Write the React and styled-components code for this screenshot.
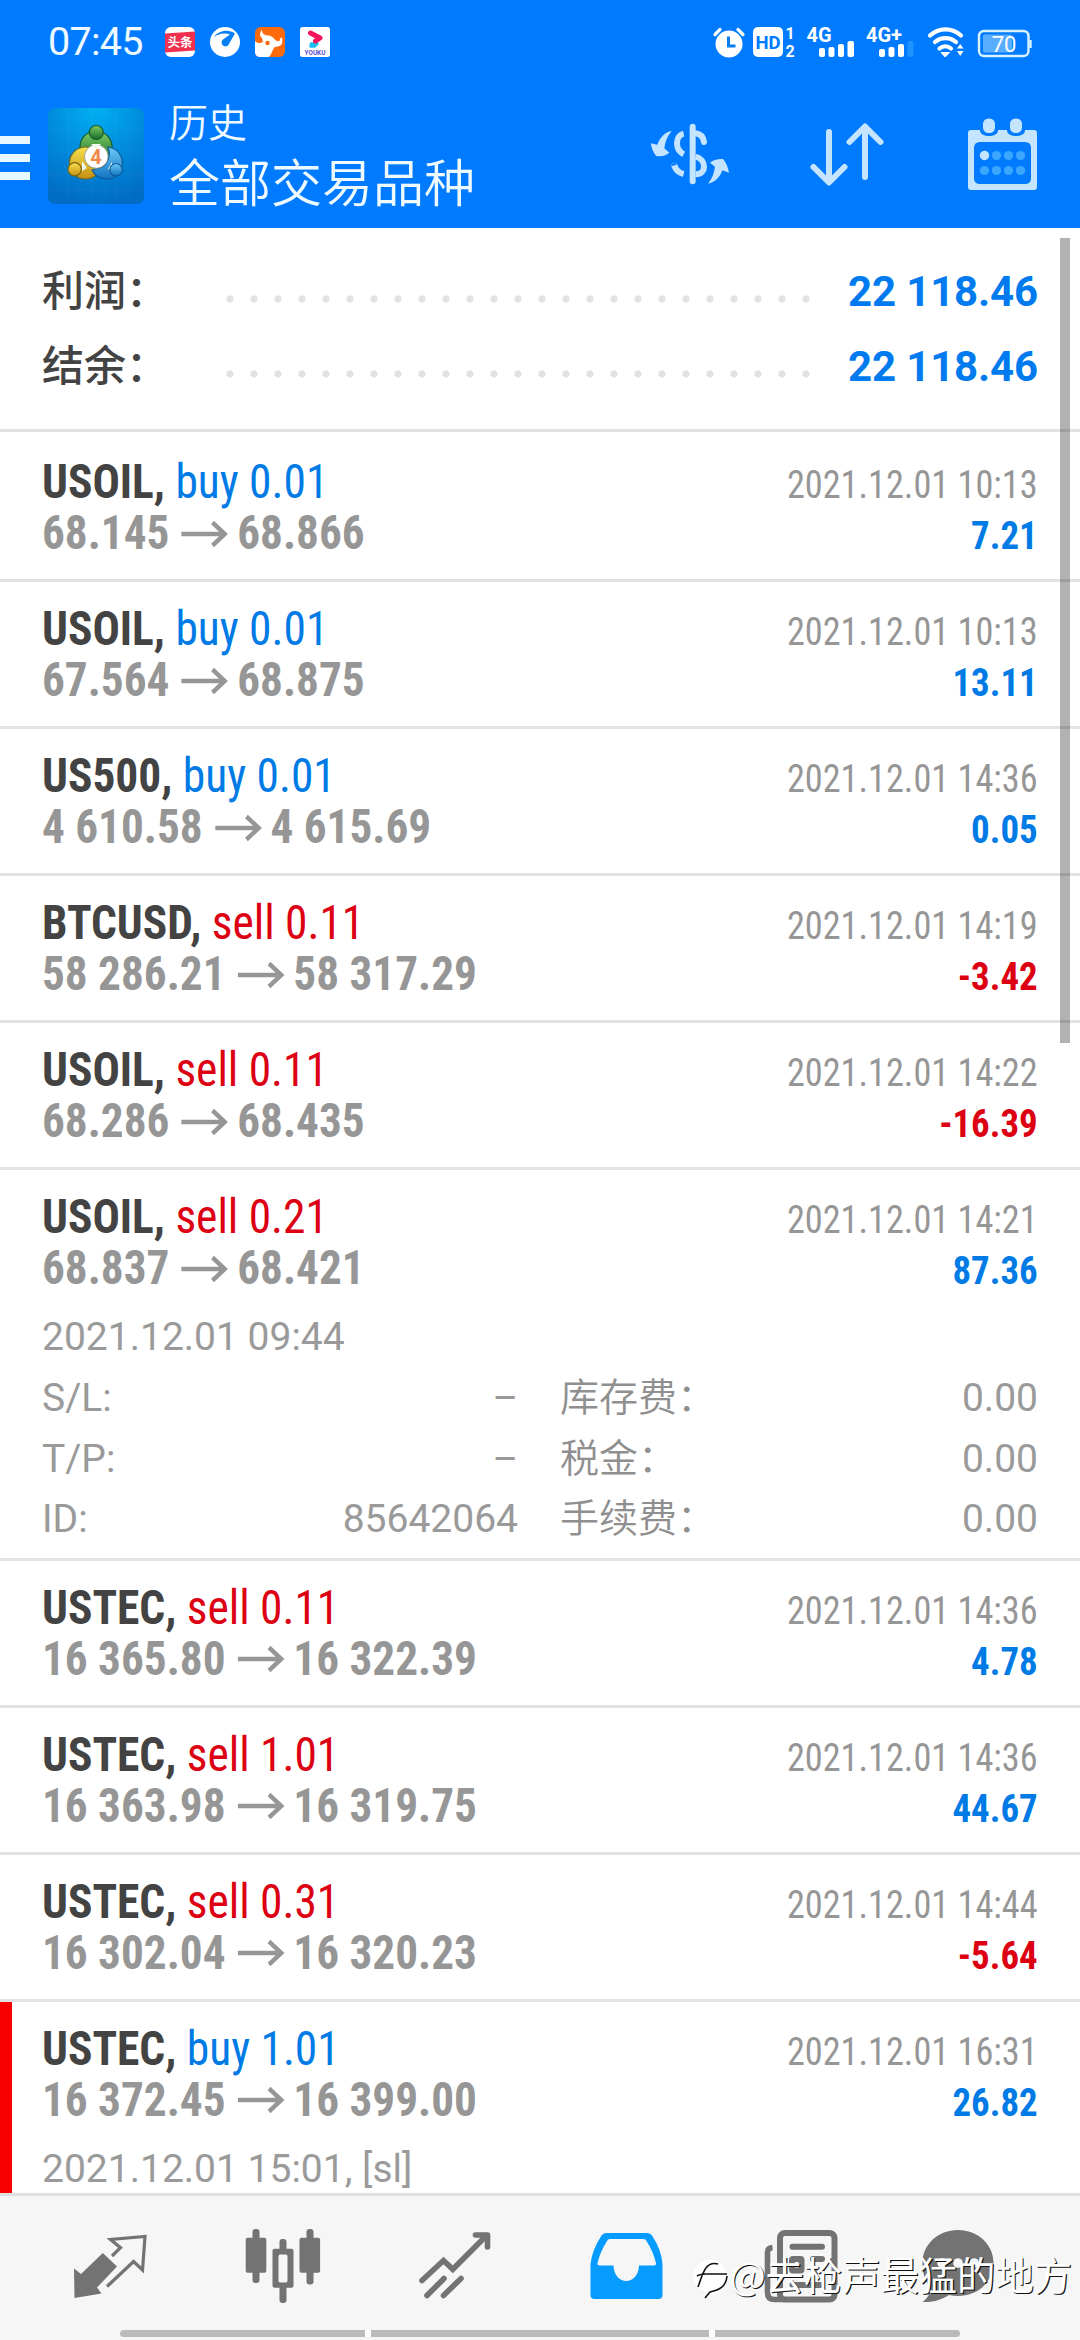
import React from 'react'
import styled, { createGlobalStyle } from 'styled-components'

const summary = [
  { label: '利润：', value: '22 118.46' },
  { label: '结余：', value: '22 118.46' },
]

const deals = [
  { id: 1, symbol: 'USOIL', side: 'buy', volume: '0.01', open: '68.145', close: '68.866', time: '2021.12.01 10:13', profit: '7.21' },
  { id: 2, symbol: 'USOIL', side: 'buy', volume: '0.01', open: '67.564', close: '68.875', time: '2021.12.01 10:13', profit: '13.11' },
  { id: 3, symbol: 'US500', side: 'buy', volume: '0.01', open: '4 610.58', close: '4 615.69', time: '2021.12.01 14:36', profit: '0.05' },
  { id: 4, symbol: 'BTCUSD', side: 'sell', volume: '0.11', open: '58 286.21', close: '58 317.29', time: '2021.12.01 14:19', profit: '-3.42' },
  { id: 5, symbol: 'USOIL', side: 'sell', volume: '0.11', open: '68.286', close: '68.435', time: '2021.12.01 14:22', profit: '-16.39' },
  {
    id: 6, symbol: 'USOIL', side: 'sell', volume: '0.21', open: '68.837', close: '68.421', time: '2021.12.01 14:21', profit: '87.36',
    opened: '2021.12.01 09:44',
    details: [
      ['S/L:', '–', '库存费：', '0.00'],
      ['T/P:', '–', '税金：', '0.00'],
      ['ID:', '85642064', '手续费：', '0.00'],
    ],
  },
  { id: 7, symbol: 'USTEC', side: 'sell', volume: '0.11', open: '16 365.80', close: '16 322.39', time: '2021.12.01 14:36', profit: '4.78' },
  { id: 8, symbol: 'USTEC', side: 'sell', volume: '1.01', open: '16 363.98', close: '16 319.75', time: '2021.12.01 14:36', profit: '44.67' },
  { id: 9, symbol: 'USTEC', side: 'sell', volume: '0.31', open: '16 302.04', close: '16 320.23', time: '2021.12.01 14:44', profit: '-5.64' },
  {
    id: 10, symbol: 'USTEC', side: 'buy', volume: '1.01', open: '16 372.45', close: '16 399.00', time: '2021.12.01 16:31', profit: '26.82',
    opened: '2021.12.01 15:01, [sl]', stopped: true,
  },
]

/* ---------- status bar ---------- */

function NotificationIcons() {
  return (
    <>
      <svg width="30" height="30" viewBox="0 0 30 30">
        <rect width="30" height="30" rx="6" fill="#fff" />
        <path d="M0 6.5 30 4.500v19L0 25.500z" fill="#f0304f" />
        <IconText x="15" y="20" fontSize="12.500" fill="#fff" $cjk>头条</IconText>
      </svg>
      <svg width="30" height="30" viewBox="0 0 30 30">
        <circle cx="15" cy="15" r="15" fill="#fff" />
        <path d="M4 10C8 4 18 1.500 25 6.500L19.500 16a4 4 0 1 1-6-4L20 7.500C14 5.500 8 7 4 10z" fill="#0a80f5" />
      </svg>
      <svg width="30" height="30" viewBox="0 0 30 30">
        <rect width="30" height="30" rx="6" fill="#ff6a0d" />
        <path d="M7 3c0 4 2 5 6 5.500 4 0 5 2.500 8 5 2 1.500 4 1 4-2l2-1c1 5 0 9-5 9l-3 1-3 6.500c-1 2-2 3-3 3H6c-4 0-6-2-6-5V14c3 3 6 2 8 1l-1-4C4 9 5 5 7 3z" fill="#fff" />
        <circle cx="12.500" cy="16" r="2.200" fill="#ff6a0d" />
      </svg>
      <svg width="30" height="30" viewBox="0 0 30 30">
        <rect width="30" height="30" rx="2.500" fill="#fff" />
        <path d="M11 16.500h6.500l-3 3h-4z" fill="#19bdf0" stroke="#19bdf0" strokeWidth="2.500" strokeLinejoin="round" />
        <path d="M10.500 6 20 11 15.500 14" fill="none" stroke="#f5155b" strokeWidth="5" strokeLinecap="round" strokeLinejoin="round" />
        <IconText x="15" y="27.500" fontSize="6.400" fill="#5c4fd0" $bold>YOUKU</IconText>
      </svg>
    </>
  )
}

function SystemIcons() {
  return (
    <svg width="319" height="32" viewBox="713 26 319 32" fill="#fff">
      {/* alarm */}
      <circle cx="729" cy="44" r="13.500" />
      <path d="M715 34.500 720 29.500M743 34.500 738 29.500" stroke="#fff" strokeWidth="3.200" strokeLinecap="round" />
      <path d="M728.500 36.500V46h7" fill="none" stroke="#0a7cf2" strokeWidth="3" />
      {/* HD */}
      <rect x="753" y="27" width="30" height="30" rx="5" />
      <IconText x="768" y="49" fontSize="18.500" fill="#007bff" $bold>HD</IconText>
      <IconText x="790" y="38.500" fontSize="16" $bold>1</IconText>
      <IconText x="790" y="57" fontSize="16" $bold>2</IconText>
      {/* mobile signal */}
      <IconText x="819" y="42" fontSize="20" $bold>4G</IconText>
      <rect x="819" y="48" width="6" height="9" rx="2" />
      <rect x="828.500" y="47" width="6" height="10" rx="2" />
      <rect x="838" y="44" width="6" height="13" rx="2" />
      <rect x="847.500" y="41" width="6.500" height="16" rx="2" />
      <IconText x="884" y="42" fontSize="20" $bold>4G+</IconText>
      <rect x="879" y="49" width="6" height="8" rx="2" />
      <rect x="888.500" y="47" width="6" height="10" rx="2" />
      <rect x="898" y="44" width="6" height="13" rx="2" />
      <rect x="907.500" y="41" width="6" height="16" rx="2" fill="#1c93ff" />
      {/* wifi */}
      <g fill="none" stroke="#fff" strokeWidth="4.200" strokeLinecap="round">
        <path d="M930 35.500a22.500 22.500 0 0 1 31 0" />
        <path d="M935 42a16 16 0 0 1 21 0" />
        <path d="M939.500 48.500a9 9 0 0 1 11.500 0" />
      </g>
      <path d="M941 52.500h8.500L945.200 57z" stroke="#fff" strokeLinejoin="round" />
      <path d="M957 48.500h6.500L960.200 44zM957 51h6.500L960.200 56z" />
      {/* battery */}
      <rect x="979" y="31" width="49.500" height="25" rx="5" fill="none" stroke="#d8f2ff" strokeWidth="2.400" />
      <rect x="983" y="34.500" width="29" height="18" rx="1.500" fill="#58adff" />
      <path d="M1030.500 40v8" stroke="#d8f2ff" strokeWidth="2.400" />
      <IconText x="1004" y="52" fontSize="22">70</IconText>
    </svg>
  )
}

/* ---------- toolbar ---------- */

function AppLogo() {
  return (
    <svg width="96" height="96" viewBox="0 0 96 96">
      <defs>
        <radialGradient id="tile" cx="0.5" cy="0" r="1">
          <stop offset="0" stopColor="#00b0f2" />
          <stop offset="0.500" stopColor="#008bdc" />
          <stop offset="1" stopColor="#006cc4" />
        </radialGradient>
        <linearGradient id="green" x2="0" y2="1">
          <stop offset="0" stopColor="#7fcb66" />
          <stop offset="1" stopColor="#146a2a" />
        </linearGradient>
        <linearGradient id="yellow" x2="0" y2="1">
          <stop offset="0" stopColor="#f8e14e" />
          <stop offset="1" stopColor="#c48e10" />
        </linearGradient>
        <linearGradient id="blue" x2="0" y2="1">
          <stop offset="0" stopColor="#6cc8f6" />
          <stop offset="1" stopColor="#1274c2" />
        </linearGradient>
      </defs>
      <rect width="96" height="96" rx="7" fill="url(#tile)" />
      <path d="M20 0v96M32 0v96M44 0v96M56 0v96M68 0v96M80 0v96M0 22h96M0 44h96M0 66h96M0 82h96" stroke="#fff" strokeOpacity="0.040" />
      <circle cx="48" cy="39" r="16" fill="url(#green)" stroke="#155d2b" strokeWidth="1.200" />
      <circle cx="37.500" cy="55" r="16" fill="url(#yellow)" stroke="#6f681f" strokeWidth="1.200" />
      <path d="M44 62a16 16 0 1 0 16-23c3 8 0 16-6 20z" fill="url(#blue)" stroke="#0f5a9b" strokeWidth="1.200" />
      <circle cx="48.300" cy="48.500" r="11.800" fill="#fff" stroke="#8a9387" strokeWidth="0.800" />
      <path d="m43 36 10 0-5 5zM34 53l5 7-5 3zM60 61l4-7 0 9z" fill="#eef7ee" />
      <circle cx="48.300" cy="24.500" r="7" fill="url(#green)" stroke="#155d2b" strokeWidth="1.200" />
      <circle cx="26.700" cy="61.300" r="6.600" fill="url(#yellow)" stroke="#7a6515" strokeWidth="1.200" />
      <circle cx="68" cy="61.700" r="6.200" fill="url(#blue)" stroke="#0f5a9b" strokeWidth="1.200" />
      <IconText x="48" y="55.500" fontSize="20" fill="#f08a4b" $bold>4</IconText>
    </svg>
  )
}

function CurrencyIcon() {
  return (
    <svg width="80" height="62" viewBox="31 309 240 186" fill="#c4e4ff">
      <rect x="150" y="311" width="18" height="182" rx="9" />
      <g fill="none" stroke="#c4e4ff" strokeWidth="18">
        <path d="M132 341c-24 5-29 46 0 62" />
        <path d="M132 462c-16-4-24-12-28-26" strokeLinecap="butt" />
        <circle cx="104" cy="437" r="0.500" strokeWidth="17" />
        <path d="M168 340c15 2 23 12 25 26" strokeLinecap="round" />
        <path d="M168 410c33 9 34 53 0 53" />
      </g>
      <path d="M96 333C76 336 61 352 53 374l-20-4c3 15 8 29 17 38 16 2 29-1 39-10l-15-13c2-18 9-37 22-52z" />
      <path d="M205 491c20-3 36-19 43-40l20 7c-3-16-8-30-18-41-16-1-29 3-39 11l15 12c-2 18-9 36-21 51z" />
    </svg>
  )
}

function SortIcon() {
  return (
    <svg width="74" height="64" viewBox="808 123 74 64" fill="none" stroke="#c4e4ff" strokeWidth="6" strokeLinecap="round" strokeLinejoin="round">
      <path d="M828 133v50M812.500 168l15.500 15.500L843.500 168" />
      <path d="M864 178v-50M848.500 143l15.500-15.500L879.500 143" />
    </svg>
  )
}

function CalendarIcon() {
  return (
    <svg width="69" height="72" viewBox="0 0 69 72" fill="#c4e4ff">
      <path fillRule="evenodd" d="M3 12h9c0 3.500 3 6 9 6s9-2.500 9-6h9c0 3.500 3 6 9 6s9-2.500 9-6h9q3 0 3 3v54q0 3-3 3H3q-3 0-3-3V15q0-3 3-3zM12 24q-6 0-6 6v30q0 6 6 6h45q6 0 6-6V30q0-6-6-6z" />
      <rect x="15" y="0.500" width="12" height="14.500" rx="5.500" />
      <rect x="42" y="0.500" width="12" height="14.500" rx="5.500" />
      <circle cx="16.500" cy="37.500" r="4.700" />
      <g fill="#3ba7ff">
        {[28.5, 40.5, 52.5].map((x) => <circle key={x} cx={x} cy="37.500" r="4.600" />)}
        {[16.5, 28.5, 40.5, 52.5].map((x) => <circle key={x} cx={x} cy="52.500" r="4.600" />)}
      </g>
    </svg>
  )
}

/* ---------- bottom navigation ---------- */

function QuotesIcon() {
  return (
    <svg width="74" height="74" viewBox="73 2229 74 74">
      <path d="M74 2268.500 81 2274 102.800 2253 117 2266.500 97 2287.500 101.500 2293.500 74.500 2298z" fill="#737373" />
      <path d="M112 2256 120.500 2247.700 110.500 2239.500 145 2236.500 142.500 2270 133.600 2261.500 107 2286.500" fill="none" stroke="#737373" strokeWidth="3.200" />
    </svg>
  )
}

function ChartIcon() {
  return (
    <svg width="76" height="76" viewBox="243.500 2228 76 76" fill="#737373">
      <rect x="251" y="2229" width="7" height="54" rx="3" />
      <rect x="244.200" y="2237.700" width="20.600" height="35" rx="2" />
      <rect x="305" y="2229" width="7" height="55.500" rx="3" />
      <rect x="298" y="2237.700" width="20.600" height="35" rx="2" />
      <rect x="278" y="2239" width="7" height="15" rx="3" />
      <rect x="278" y="2284" width="7" height="19" rx="3" />
      <path fillRule="evenodd" d="M273 2248.700h17q2 0 2 2v35q0 2-2 2h-17q-2 0-2-2v-35q0-2 2-2zM278.500 2254.500q-1.500 0-1.500 2v24q0 2 1.500 2h6q1.500 0 1.500-2v-24q0-2-1.500-2z" />
    </svg>
  )
}

function TradeIcon() {
  return (
    <svg width="74" height="74" viewBox="417 2229 74 74" fill="none" stroke="#737373" strokeWidth="5.600" strokeLinecap="round">
      <path d="M421 2280.500 442.500 2260.500 451.800 2269.300 485 2236" />
      <path d="M474.500 2235h12v12" strokeLinejoin="round" />
      <path d="M443 2278.500 426 2295.500M460 2278.500 442.500 2295.500" />
    </svg>
  )
}

function HistoryIcon() {
  return (
    <svg width="74" height="74" viewBox="590 2228 74 74" fill="#059bff">
      <path fillRule="evenodd" d="M606 2232h41.500q3 0 4.500 2.500Q661.500 2249 662.500 2263v31q0 4-4 4H594.500q-4 0-4-4v-31Q592 2249 601.500 2234.500 603 2232 606 2232zM610 2238q-2 0-3 2-6.500 10-9.500 22-.500 2.500 2 2.500H613.500C614 2285 638.500 2285 639 2264.500h15q2.500 0 2-2.500-3-12-9.500-22-1-2-3-2z" />
    </svg>
  )
}

function NewsIcon() {
  return (
    <svg width="77" height="74" viewBox="761.500 2228 77 74" fill="none" stroke="#737373" strokeWidth="6">
      <rect x="780.500" y="2232" width="54.500" height="66.500" rx="5" />
      <path d="M773 2246.500q-5 .5-5 5v40q0 7 7 7h10" strokeWidth="5.600" />
      <path d="M793 2245.800h29.500M813.500 2258h9M813.500 2270h9M793 2284h29.500" strokeLinecap="round" />
      <rect x="792.500" y="2258" width="9.500" height="11.500" rx="1" />
    </svg>
  )
}

function MessagesIcon() {
  return (
    <svg width="74" height="74" viewBox="921 2228 74 74">
      <path d="M958 2229c20 0 35.500 14.500 35.500 33s-15.500 33-35.500 33c-3 0-6-.300-9-1-7 4.500-15 7.500-26.500 7 4-3 8-8 8.500-14-5.500-6-8.500-14-8.500-25 0-18.500 15.500-33 35.500-33z" fill="#737373" />
      <g fill="#f6f6f6">
        <circle cx="942" cy="2262" r="4.800" />
        <circle cx="958" cy="2262" r="4.800" />
        <circle cx="974" cy="2262" r="4.800" />
      </g>
    </svg>
  )
}

function Deal({ deal }) {
  const { symbol, side, volume, open, close, time, profit, opened, details, stopped } = deal

  return (
    <DealItem $stopped={stopped} $open={!!opened}>
      <DealHead>
        <div>
          <DealTitle>
            {symbol}, <Side $side={side}>{side} {volume}</Side>
          </DealTitle>
          <Prices>
            {open}
            <PriceArrow viewBox="0 0 49 26">
              <path d="M0 13h47M33 1.500 46 13 33 24.500" />
            </PriceArrow>
            {close}
          </Prices>
        </div>
        <DealResult>
          <CloseTime>{time}</CloseTime>
          <Profit $loss={profit.startsWith('-')}>{profit}</Profit>
        </DealResult>
      </DealHead>
      {opened && <OpenTime>{opened}</OpenTime>}
      {details && details.map(([label, value, feeLabel, fee]) => (
        <DetailRow key={label}>
          <span>{label}</span>
          <DetailValue>{value}</DetailValue>
          <FeeLabel>{feeLabel}</FeeLabel>
          <DetailValue>{fee}</DetailValue>
        </DetailRow>
      ))}
    </DealItem>
  )
}

function App() {
  return (
    <Screen>
      <GlobalStyle />
      <StatusBar>
        <Clock>07:45</Clock>
        <Notifications><NotificationIcons /></Notifications>
        <SystemIcons />
      </StatusBar>
      <Toolbar>
        <MenuButton><i /><i /><i /></MenuButton>
        <AppLogo />
        <Heading>
          <Caption>历史</Caption>
          <Title>全部交易品种</Title>
        </Heading>
        <ToolButton><CurrencyIcon /></ToolButton>
        <ToolButton><SortIcon /></ToolButton>
        <ToolButton><CalendarIcon /></ToolButton>
      </Toolbar>
      <Content>
        <Summary>
          {summary.map((item) => (
            <SummaryRow key={item.label}>
              <SummaryLabel>{item.label}</SummaryLabel>
              <Dots />
              <SummaryValue>{item.value}</SummaryValue>
            </SummaryRow>
          ))}
        </Summary>
        <DealList>
          {deals.map((deal) => <Deal key={deal.id} deal={deal} />)}
        </DealList>
        <ScrollThumb />
      </Content>
      <BottomNav>
        <NavItems>
          <QuotesIcon />
          <ChartIcon />
          <TradeIcon />
          <HistoryIcon />
          <NewsIcon />
          <MessagesIcon />
        </NavItems>
        <GestureBar><i /><i /><i /></GestureBar>
        <Watermark>
          <svg width="36" height="42" viewBox="0 0 36 42">
            <path d="M18 2c10 0 17 7 17 16 0 12-9 18-22 22l4-6C7 33 1 26 1 19 1 9 8 2 18 2z" fill="#fff" />
            <path d="M6 29C11 14 14 3 26 6M5 18c3-2 6-2 9-2h21M35 18c-1 11-8 14-17 16l-5 6" fill="none" stroke="#111" strokeWidth="1.600" />
          </svg>
          @去枪声最猛的地方
        </Watermark>
      </BottomNav>
    </Screen>
  )
}

const GlobalStyle = createGlobalStyle`
  * {
    box-sizing: border-box;
  }
  body {
    margin: 0;
    background: #fff;
  }
  svg {
    display: block;
    flex-shrink: 0;
    overflow: visible;
  }
`;

const IconText = styled.text`
  font-family: ${({ $cjk }) => ($cjk ? '"Noto Sans CJK SC"' : 'Roboto')}, sans-serif;
  font-weight: ${({ $bold, $cjk }) => ($bold || $cjk ? 700 : 400)};
  text-anchor: middle;
`;

const Screen = styled.div`
  width: 1080px;
  height: 2340px;
  display: flex;
  flex-direction: column;
  overflow: hidden;
  background: #fff;
  font-family: Roboto, "Noto Sans CJK SC", sans-serif;
`;

const StatusBar = styled.div`
  flex: 0 0 84px;
  display: flex;
  align-items: center;
  padding: 0 48px;
  background: #007bff;
  color: #eefaff;
`;

const Clock = styled.span`
  width: 117px;
  font-size: 39.500px;
  letter-spacing: -0.700px;
  line-height: 84px;
`;

const Notifications = styled.div`
  flex: 1;
  display: flex;
  gap: 15px;
`;

const Toolbar = styled.header`
  flex: 0 0 144px;
  display: flex;
  align-items: center;
  background: #007bff;
  color: #eefaff;
`;

const MenuButton = styled.div`
  width: 48px;
  padding: 4px 18px 0 0;
  display: flex;
  flex-direction: column;
  gap: 10px;
  i {
    height: 8px;
    background: #e8f8ff;
  }
`;

const Heading = styled.div`
  flex: 1;
  padding: 0 0 6px 25px;
  font-family: "Noto Sans CJK SC", sans-serif;
  font-weight: 350;
`;

const Caption = styled.div`
  font-size: 39px;
  line-height: 54px;
`;

const Title = styled.div`
  font-size: 51px;
  line-height: 66px;
`;

const ToolButton = styled.div`
  width: 156px;
  padding-bottom: 4px;
  display: flex;
  justify-content: center;
`;

const Content = styled.main`
  position: relative;
  flex: 1;
  min-height: 0;
  overflow: hidden;
`;

const Summary = styled.section`
  height: 204px;
  padding: 26px 42px 0;
  border-bottom: 3px solid #e2e2e2;
`;

const SummaryRow = styled.div`
  display: flex;
  align-items: center;
  height: 75px;
`;

const SummaryLabel = styled.span`
  width: 176px;
  font-family: "Noto Sans CJK SC", sans-serif;
  font-size: 42px;
  font-weight: 500;
  line-height: 67px;
  padding-bottom: 8px;
  color: #434343;
`;

const Dots = styled.span`
  width: 600px;
  height: 8px;
  margin-top: 15px;
  background: radial-gradient(circle at center, #e2e2e2 3.200px, transparent 4px) 0 0 / 24px 8px repeat-x;
`;

const SummaryValue = styled.span`
  flex: 1;
  text-align: right;
  font-size: 42px;
  font-weight: 700;
  letter-spacing: -0.150px;
  line-height: 75px;
  color: #007bef;
`;

const DealList = styled.section`
  padding-top: 3px;
`;

const DealItem = styled.article`
  padding: 21px 42px ${({ $open }) => ($open ? 9 : 21)}px;
  border-bottom: 3px solid #e2e2e2;
  box-shadow: ${({ $stopped }) => ($stopped ? 'inset 12px 0 #f60000' : 'none')};
`;

const DealHead = styled.div`
  display: flex;
  justify-content: space-between;
  height: 102px;
  font-family: "Roboto Condensed", Roboto, sans-serif;
  line-height: 51px;
`;

/* the condensed face is still a little too wide, so each line is narrowed further */
const DealTitle = styled.div`
  font-size: 48px;
  font-weight: 700;
  color: #434343;
  transform: scaleX(0.946);
  transform-origin: left;
`;

const Side = styled.span`
  font-weight: 400;
  color: ${({ $side }) => ($side === 'buy' ? '#007be6' : '#dc0012')};
`;

const Prices = styled.div`
  display: flex;
  align-items: center;
  font-size: 48px;
  font-weight: 700;
  color: #969696;
  transform: scaleX(0.942);
  transform-origin: left;
`;

const PriceArrow = styled.svg`
  width: 49px;
  height: 26px;
  margin: 2px 10px 0 13px;
  fill: none;
  stroke: #969696;
  stroke-width: 4.500;
`;

const DealResult = styled.div`
  padding-top: 4px;
  text-align: right;
  font-size: 39px;
`;

const CloseTime = styled.div`
  color: #969696;
  transform: scaleX(0.93);
  transform-origin: right;
`;

const Profit = styled.div`
  font-weight: 700;
  color: ${({ $loss }) => ($loss ? '#dc0012' : '#007be6')};
  transform: scaleX(0.945);
  transform-origin: right;
`;

const OpenTime = styled.div`
  margin-top: 14px;
  font-size: 39px;
  line-height: 61px;
  color: #9a9a9a;
`;

const DetailRow = styled.div`
  display: grid;
  grid-template-columns: 120px 356px 320px 1fr;
  align-items: center;
  height: 60.500px;
  font-size: 39px;
  line-height: 60px;
  color: #9a9a9a;
  &:last-child {
    height: 59.500px;
  }
`;

const DetailValue = styled.span`
  text-align: right;
`;

const FeeLabel = styled.span`
  padding: 0 0 8px 42px;
  font-family: "Noto Sans CJK SC", sans-serif;
  font-weight: 350;
  line-height: 52px;
  color: #8f8f8f;
`;

const ScrollThumb = styled.div`
  position: absolute;
  top: 10px;
  right: 10px;
  width: 10px;
  height: 805px;
  background: rgba(0, 0, 0, 0.3);
`;

const BottomNav = styled.nav`
  position: relative;
  flex: 0 0 147px;
  display: flex;
  flex-direction: column;
  padding-bottom: 3px;
  border-top: 3px solid #e0e0e0;
  background: #f6f6f6;
`;

const NavItems = styled.div`
  flex: 1;
  display: flex;
  align-items: center;
  gap: 97.500px;
  padding: 6px 0 0 73px;
  svg:last-child {
    margin-left: -15px;
  }
`;

const GestureBar = styled.div`
  display: grid;
  grid-template-columns: 245px 338px 245px;
  gap: 6px;
  width: 840px;
  height: 7px;
  margin: 0 auto;
  border-radius: 4px;
  overflow: hidden;
  background: #fff;
  i {
    background: #bababa;
  }
`;

const Watermark = styled.div`
  position: absolute;
  right: 8px;
  bottom: 38px;
  display: flex;
  align-items: center;
  font-family: "Noto Sans CJK SC", sans-serif;
  font-size: 38.300px;
  line-height: 56px;
  color: #fff;
  text-shadow: 1.200px 1.200px 0.500px #111;
  white-space: nowrap;
  svg {
    margin: 10px 1px 0 0;
  }
`;

export default App
